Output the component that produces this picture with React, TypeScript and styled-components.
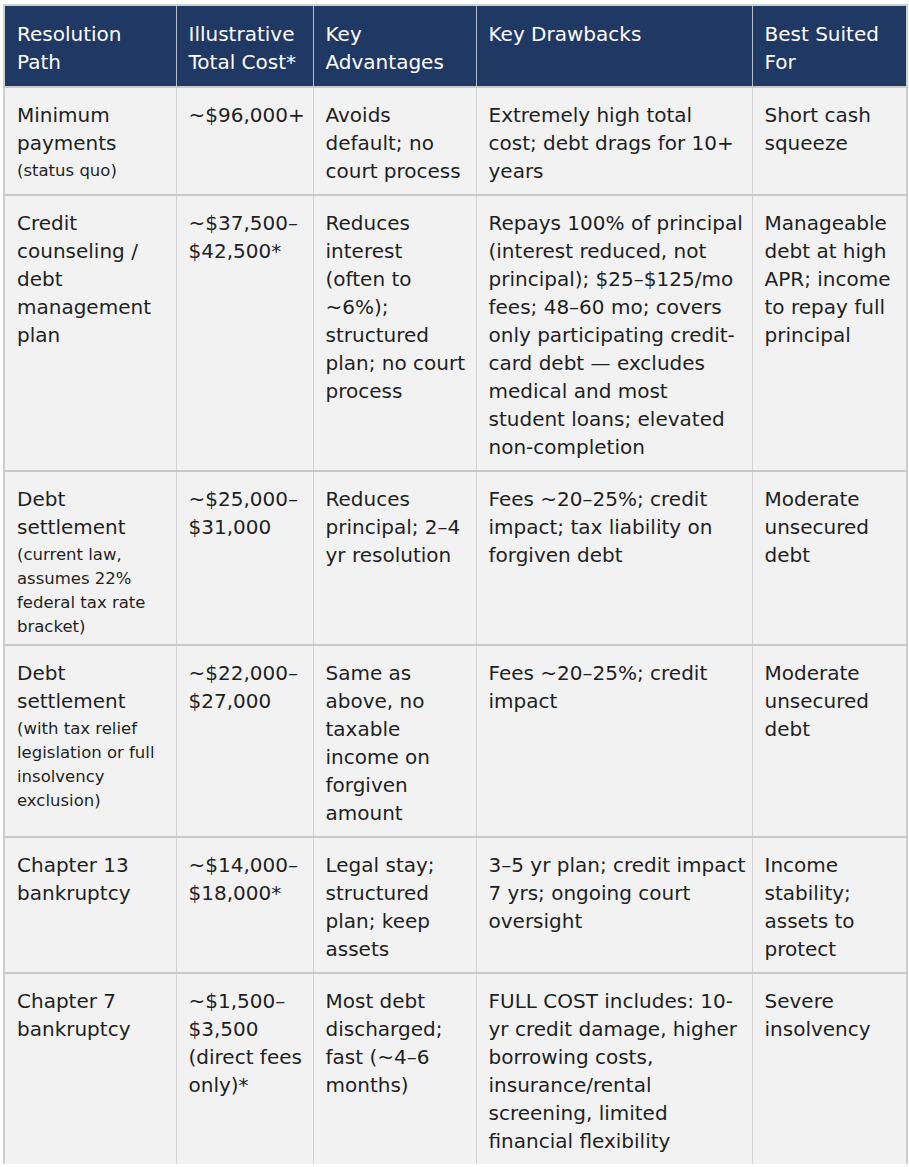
import React from "react";
import styled, { createGlobalStyle } from "styled-components";

const Global = createGlobalStyle`
  html, body { margin: 0; padding: 0; background: #ffffff; }
  body { font-family: "DejaVu Sans", "Liberation Sans", sans-serif; }
`;

const Page = styled.div`
  padding: 4px 2px 0 3px;
`;

const Table = styled.table`
  border-collapse: collapse;
  table-layout: fixed;
  width: 903px;
  border: 2px solid #cfcfcf;
  border-bottom: none;
`;

const HeadCell = styled.th`
  background: #203864;
  color: #ffffff;
  font-weight: 400;
  text-align: left;
  vertical-align: top;
  font-size: 20px;
  line-height: 28px;
  padding: 14px 12px 10px 12px;
  border-left: 1px solid #b4bccb;
  white-space: nowrap;
  &:first-child { border-left: none; }
`;

const Cell = styled.td`
  background: #f2f2f2;
  color: #1f1f1f;
  text-align: left;
  vertical-align: top;
  font-size: 20px;
  line-height: 28px;
  padding: 13px 12px 9px 12px;
  border-top: 2px solid #c9c9c9;
  border-left: 1px solid #d2d2d2;
  white-space: nowrap;
  &:first-child { border-left: none; }
`;

const Line = styled.div``;

const Note = styled.div`
  font-size: 16.5px;
  line-height: 24px;
  margin-top: 2px;
  margin-bottom: -4px;
`;

type CellData = { lines: string[]; note?: string[] };

const widths = [172, 137, 163, 276, 155];

const header: string[][] = [
  ["Resolution", "Path"],
  ["Illustrative", "Total Cost*"],
  ["Key", "Advantages"],
  ["Key Drawbacks"],
  ["Best Suited", "For"],
];

const rows: CellData[][] = [
  [
    { lines: ["Minimum", "payments"], note: ["(status quo)"] },
    { lines: ["~$96,000+"] },
    { lines: ["Avoids", "default; no", "court process"] },
    { lines: ["Extremely high total", "cost; debt drags for 10+", "years"] },
    { lines: ["Short cash", "squeeze"] },
  ],
  [
    { lines: ["Credit", "counseling /", "debt", "management", "plan"] },
    { lines: ["~$37,500–", "$42,500*"] },
    { lines: ["Reduces", "interest", "(often to", "~6%);", "structured", "plan; no court", "process"] },
    {
      lines: [
        "Repays 100% of principal",
        "(interest reduced, not",
        "principal); $25–$125/mo",
        "fees; 48–60 mo; covers",
        "only participating credit-",
        "card debt — excludes",
        "medical and most",
        "student loans; elevated",
        "non-completion",
      ],
    },
    { lines: ["Manageable", "debt at high", "APR; income", "to repay full", "principal"] },
  ],
  [
    { lines: ["Debt", "settlement"], note: ["(current law,", "assumes 22%", "federal tax rate", "bracket)"] },
    { lines: ["~$25,000–", "$31,000"] },
    { lines: ["Reduces", "principal; 2–4", "yr resolution"] },
    { lines: ["Fees ~20–25%; credit", "impact; tax liability on", "forgiven debt"] },
    { lines: ["Moderate", "unsecured", "debt"] },
  ],
  [
    { lines: ["Debt", "settlement"], note: ["(with tax relief", "legislation or full", "insolvency", "exclusion)"] },
    { lines: ["~$22,000–", "$27,000"] },
    { lines: ["Same as", "above, no", "taxable", "income on", "forgiven", "amount"] },
    { lines: ["Fees ~20–25%; credit", "impact"] },
    { lines: ["Moderate", "unsecured", "debt"] },
  ],
  [
    { lines: ["Chapter 13", "bankruptcy"] },
    { lines: ["~$14,000–", "$18,000*"] },
    { lines: ["Legal stay;", "structured", "plan; keep", "assets"] },
    { lines: ["3–5 yr plan; credit impact", "7 yrs; ongoing court", "oversight"] },
    { lines: ["Income", "stability;", "assets to", "protect"] },
  ],
  [
    { lines: ["Chapter 7", "bankruptcy"] },
    { lines: ["~$1,500–", "$3,500", "(direct fees", "only)*"] },
    { lines: ["Most debt", "discharged;", "fast (~4–6", "months)"] },
    {
      lines: [
        "FULL COST includes: 10-",
        "yr credit damage, higher",
        "borrowing costs,",
        "insurance/rental",
        "screening, limited",
        "financial flexibility",
      ],
    },
    { lines: ["Severe", "insolvency"] },
  ],
];

export default function App() {
  return (
    <Page>
      <Global />
      <Table>
        <colgroup>
          {widths.map((w, i) => (
            <col key={i} style={{ width: w }} />
          ))}
        </colgroup>
        <thead>
          <tr>
            {header.map((h, i) => (
              <HeadCell key={i}>
                {h.map((l, j) => (
                  <Line key={j}>{l}</Line>
                ))}
              </HeadCell>
            ))}
          </tr>
        </thead>
        <tbody>
          {rows.map((r, i) => (
            <tr key={i}>
              {r.map((c, j) => (
                <Cell key={j}>
                  {c.lines.map((l, k) => (
                    <Line key={k}>{l}</Line>
                  ))}
                  {c.note && (
                    <Note>
                      {c.note.map((l, k) => (
                        <Line key={k}>{l}</Line>
                      ))}
                    </Note>
                  )}
                </Cell>
              ))}
            </tr>
          ))}
        </tbody>
      </Table>
    </Page>
  );
}
